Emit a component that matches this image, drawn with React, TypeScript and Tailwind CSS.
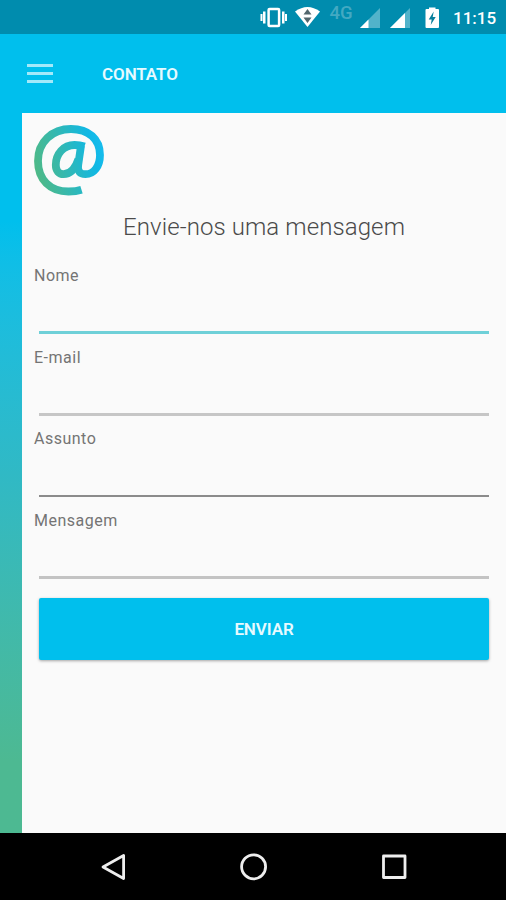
import React from "react";

type Field = {
  id: string;
  label: string;
  line: string;
};

const fields: Field[] = [
  { id: "nome", label: "Nome", line: "border-b-3 border-[#6fd0d8]" },
  { id: "email", label: "E-mail", line: "border-b-3 border-[#c6c6c6]" },
  { id: "assunto", label: "Assunto", line: "border-b-2 border-[#8b8b8b]" },
  { id: "mensagem", label: "Mensagem", line: "border-b-3 border-[#c3c3c3]" },
];

const StatusBar = () => (
  <div className="flex h-[34px] shrink-0 bg-[#008cae] text-white">
    <svg width="190" height="34" viewBox="0 0 190 34" className="ml-[256px] shrink-0" fill="white">
      {/* Vibrate */}
      <rect x="12.600" y="9" width="10.500" height="17" rx="1" fill="none" stroke="white" strokeWidth="2.500" />
      <path d="M7 11.500h2.500v12H7zM4.500 14h2v7h-2zM26 11.500h2.500v12H26zM29 14h2v7h-2z" />
      {/* Wifi */}
      <path d="M39 11.500Q51.500 2.500 64 11.500L51.500 27z" />
      <path d="M51.500 9l4 5.500h-8zM51.500 23l-4-5.500h8z" fill="#52666d" />
      {/* Mobile signal */}
      <text x="73.500" y="18.700" className="font-['Roboto'] text-[18.500px] font-medium" fill="#43a9c2">
        4G
      </text>
      <path d="M124 8v20h-20z" fill="#52b3ca" />
      <path d="M112.500 19.500V28H104z" />
      <path d="M154 8v20h-20z" fill="#52b3ca" />
      <path d="M149 13v15h-15z" />
      {/* Battery */}
      <path d="M173 9h-2.500a1 1 0 0 0-1 1v17a1 1 0 0 0 1 1h11.500a1 1 0 0 0 1-1V10a1 1 0 0 0-1-1H179.500V7.500H173z" />
      <path d="M177.700 11.500l-5 8h3l-1 5.500 5-8h-3z" fill="#087f9d" />
    </svg>
    <span className="ml-[7px] mt-[6px] whitespace-nowrap text-[17px] font-medium leading-6">11:15</span>
  </div>
);

const AtLogo = () => (
  <svg width="71" height="71" viewBox="0 0 71 71" fill="none" className="ml-3 mt-3">
    <defs>
      <linearGradient id="at" x1="0" y1="44" x2="70" y2="26" gradientUnits="userSpaceOnUse">
        <stop offset="0" stopColor="#4fb985" />
        <stop offset="0.450" stopColor="#31b8b5" />
        <stop offset="0.850" stopColor="#10b8e5" />
        <stop offset="1" stopColor="#16bced" />
      </linearGradient>
    </defs>
    <g stroke="url(#at)" strokeWidth="7.800" strokeLinejoin="round">
      <path d="M47.500 64.800C44 65.900 39 66.500 34.500 66.500C16 66.500 4 54.500 4 36C4 17 18 4 37 4C54.500 4 66 14 66 30C66 41 60 49.200 51.500 49.200C45.800 49.200 43.300 46 44.200 40L47 20.800" />
      <path d="M50.500 21.500C46.500 20.200 43.500 20 40.500 20C29.500 20 21.800 29 21.800 40C21.800 46 25 49.200 29.500 49.200C36.500 49.200 41.500 43 44.500 34" />
    </g>
  </svg>
);

const NavBar = () => (
  <div className="flex h-[67px] shrink-0 items-center bg-black pl-[100px]">
    <svg width="308" height="32" viewBox="0 0 308 32" fill="none" stroke="#eeeeee" strokeWidth="2.800" strokeLinejoin="round">
      <path d="M23.600 4.500v23L3 16z" />
      <circle cx="153.600" cy="15.800" r="12" />
      <rect x="283.500" y="5" width="21.500" height="21.500" />
    </svg>
  </div>
);

const App = () => {
  return (
    <div className="flex h-[900px] w-[506px] flex-col overflow-hidden bg-[#00bfed] font-['Roboto',sans-serif]">
      <StatusBar />

      {/* Toolbar */}
      <header className="flex h-[79px] shrink-0 items-center bg-[#00bfed] pl-[27px]">
        <button type="button" aria-label="Menu" className="flex w-[26px] flex-col gap-[5px]">
          <span className="h-[3px] bg-[#a3e9fa]" />
          <span className="h-[3px] bg-[#a3e9fa]" />
          <span className="h-[3px] bg-[#a3e9fa]" />
        </button>
        <h1 className="ml-[49px] pt-[2px] text-[17px] font-semibold tracking-[-0.1px] text-[#e7faff]">CONTATO</h1>
      </header>

      <div className="flex h-[720px] shrink-0 bg-linear-to-b from-[#00bfed] from-15% via-[#30b9c5] via-50% to-[#4db992] to-90% pl-[22px]">
        <main className="flex flex-1 flex-col bg-[#fafafa]">
          <AtLogo />
          <h2 className="mt-[14px] text-center text-[24px] font-light leading-[34px] tracking-[0.1px] text-[#4a4a4a]">
            Envie-nos uma mensagem
          </h2>

          <form className="mt-[16px] flex flex-col pl-3 pr-[17px]">
            {fields.map((field) => (
              <div key={field.id} className="flex h-[81.500px] flex-col">
                <label htmlFor={field.id} className="text-[16px] leading-[32px] tracking-[0.5px] text-[#747474]">
                  {field.label}
                </label>
                <input
                  id={field.id}
                  className={`ml-[5px] h-[42px] bg-transparent outline-none ${field.line}`}
                />
              </div>
            ))}
            <button
              type="button"
              className="ml-[5px] mt-[12px] h-[62px] rounded-[2px] bg-[#00bfed] pt-[2px] text-[17px] font-semibold tracking-[-0.1px] text-[#e7faff] shadow-[0_1px_3px_rgba(0,0,0,0.35)]"
            >
              ENVIAR
            </button>
          </form>
        </main>
      </div>

      <NavBar />
    </div>
  );
};

export default App;
